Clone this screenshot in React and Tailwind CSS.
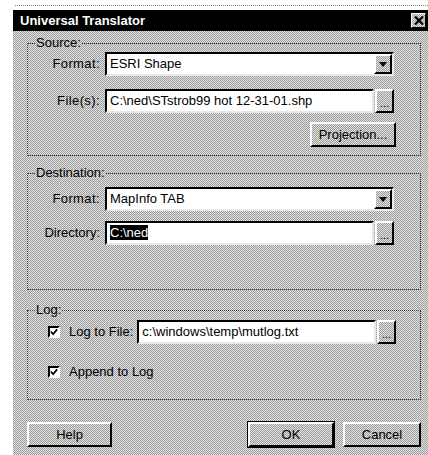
const dither =
  'bg-[repeating-conic-gradient(#9c9c9c_0_25%,#e2e2e2_0_50%)] bg-[length:2px_2px]';

const sunken =
  'border-2 border-t-black border-l-black border-b-[#e8e8e8] border-r-[#e8e8e8] bg-white';

const raised =
  'border-2 border-t-white border-l-white border-b-black border-r-black';

function Group({ label, className, children }) {
  return (
    <fieldset className={`border border-dotted border-[#333] ${className}`}>
      <legend className="ml-[7px] px-[1px] text-[13px] leading-[14px]">{label}</legend>
      {children}
    </fieldset>
  );
}

function Combo({ value }) {
  return (
    <div className={`${sunken} flex h-[24px] items-stretch`}>
      <span className="flex-1 pl-[3px] text-[13px] leading-[20px]">{value}</span>
      <span className={`${raised} ${dither} flex w-[18px] items-center justify-center`}>
        <svg width="8" height="5" viewBox="0 0 8 5">
          <path d="M0 0h8L4 5z" fill="#000" />
        </svg>
      </span>
    </div>
  );
}

function Browse({ children }) {
  return (
    <div className="flex h-[24px] items-stretch">
      <div className={`${sunken} flex-1 pl-[3px] text-[13px] leading-[20px]`}>{children}</div>
      <button className={`${raised} ${dither} ml-[1px] w-[19px] pt-[4px] text-[11px] leading-[14px]`}>...</button>
    </div>
  );
}

function Check({ label }) {
  return (
    <label className="flex items-center gap-[9px] text-[13px]">
      <span className="flex h-[12px] w-[12px] items-center justify-center border-2 border-t-black border-l-black border-b-white border-r-white bg-white">
        <svg width="9" height="8" viewBox="0 0 9 8">
          <path d="M1 3.5l2.5 3L8 1" fill="none" stroke="#000" strokeWidth="2" />
        </svg>
      </span>
      {label}
    </label>
  );
}

function Button({ children, isDefault, className }) {
  return (
    <button
      className={`${dither} h-[25px] text-[13px] ${isDefault ? 'outline outline-1 outline-black' : ''} ${raised} ${className}`}
    >
      {children}
    </button>
  );
}

export default function App() {
  return (
    <div
      className="h-[455px] w-[428px] overflow-hidden bg-white text-black"
      style={{ fontFamily: '"Liberation Sans", Arial, sans-serif' }}
    >
      <div className="ml-[15px] mt-[5px] border-t border-dotted border-[#888]" />
      <div className={`${dither} ml-[13px] mt-[4px] h-[445px] w-[415px]`}>
        <div className="flex h-[21px] items-center justify-between bg-black pl-[7px] pr-[2px]">
          <span className="text-[13px] font-bold text-white">Universal Translator</span>
          <span className={`${dither} flex h-[15px] w-[15px] items-center justify-center border border-t-white border-l-white border-b-black border-r-black`}>
            <svg width="10" height="9" viewBox="0 0 10 9">
              <path d="M1 0.5l8 8M9 0.5l-8 8" stroke="#000" strokeWidth="2.2" />
            </svg>
          </span>
        </div>

        <div className="pl-[14px] pr-[7px]">
          <Group label="Source:" className="mt-[5px] h-[120px]">
            <div className="mt-[2px] grid grid-cols-[72px_1fr] items-center gap-x-[5px] gap-y-[13px] pr-[26px] text-[13px]">
              <span className="text-right tracking-[0.4px]">Format:</span>
              <Combo value="ESRI Shape" />
              <span className="text-right tracking-[0.4px]">File(s):</span>
              <Browse>C:\ned\STstrob99 hot 12-31-01.shp</Browse>
            </div>
            <div className="mt-[9px] flex justify-end pr-[24px]">
              <Button className="w-[86px]">Projection...</Button>
            </div>
          </Group>

          <Group label="Destination:" className="mt-[10px] h-[124px]">
            <div className="mt-[7px] grid grid-cols-[72px_1fr] items-center gap-x-[5px] gap-y-[10px] pr-[26px] text-[13px]">
              <span className="text-right tracking-[0.4px]">Format:</span>
              <Combo value="MapInfo TAB" />
              <span className="text-right">Directory:</span>
              <Browse>
                <span className="bg-black text-white">C:\ned</span>
              </Browse>
            </div>
          </Group>

          <Group label="Log:" className="mt-[13px] h-[97px]">
            <div className="mt-[3px] flex items-center pl-[20px] pr-[24px]">
              <Check label="Log to File:" />
              <div className="ml-[4px] flex-1">
                <Browse>c:\windows\temp\mutlog.txt</Browse>
              </div>
            </div>
            <div className="mt-[18px] pl-[20px]">
              <Check label="Append to Log" />
            </div>
          </Group>

          <div className="mt-[22px] flex items-center">
            <Button className="w-[85px]">Help</Button>
            <Button isDefault className="ml-auto w-[86px]">OK</Button>
            <Button className="ml-[9px] w-[78px]">Cancel</Button>
          </div>
        </div>
      </div>
    </div>
  );
}
